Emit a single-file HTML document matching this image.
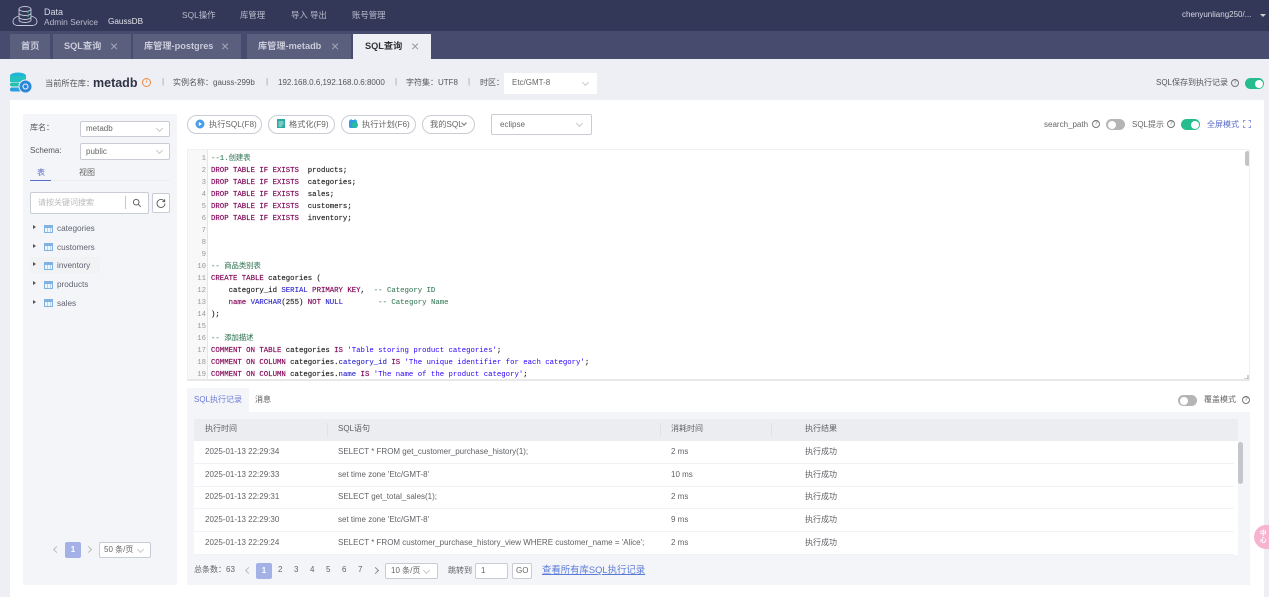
<!DOCTYPE html>
<html lang="zh"><head><meta charset="utf-8"><title>SQL查询</title>
<style>
*{box-sizing:border-box}
html,body{margin:0;padding:0;width:1269px;height:597px;overflow:hidden;background:#eeeff5}
body{position:relative;font:8px "Liberation Sans","Noto Sans CJK SC",sans-serif;color:#555;filter:blur(.3px)}
.a,.t{position:absolute}
.t{white-space:nowrap;line-height:12px}
.tab{position:absolute;top:34px;height:25px;background:#5b5f7e;color:#c9cbd8;font-size:9.2px;line-height:25px;padding-left:11px;white-space:nowrap;font-weight:bold}
.tab i{position:absolute;top:0;font-style:normal;font-weight:normal;font-size:14px;color:#a4a6b8}
.nav{position:absolute;top:9px;color:#b9bccb;font-size:8.4px;line-height:12px;white-space:nowrap}
.sel{position:absolute;background:#fff;border:1px solid #c9ccd4;border-radius:2px;color:#666;font-size:8px;padding-left:5px;white-space:nowrap}
.chev{position:absolute;width:5px;height:5px;border-right:1px solid #c6c8ce;border-bottom:1px solid #c6c8ce;transform:rotate(45deg)}
.btn{position:absolute;top:115px;height:19px;border:1px solid #c9ccd4;border-radius:10px;background:#fff;color:#666;line-height:17px;font-size:8.2px;white-space:nowrap}
.tree{position:absolute;left:57px;color:#5f6470;font-size:8.2px;line-height:12px}
.arrow{position:absolute;left:33px;width:0;height:0;border-left:3px solid #555;border-top:2.5px solid transparent;border-bottom:2.5px solid transparent}
.ticon{position:absolute;left:44px;width:9px;height:8px;border:1px solid #7fb2e0;background:linear-gradient(#7fb2e0 2px,transparent 2px),repeating-linear-gradient(90deg,transparent 0 2px,#b5d3ee 2px 3px),#eef5fb}
#code{position:absolute;left:187px;top:149px;width:1063px;height:232px;background:#fff;border:1px solid #f0f0f0;border-bottom:2px solid #e8e8e8;overflow:hidden}
#gut{position:absolute;left:0;top:0;width:20px;height:230px;background:#f8f8f8;border-right:1px solid #e6e6e6}
.l{position:absolute;left:23px;font:7.33px/12px "Liberation Mono","Noto Sans CJK SC",monospace;white-space:pre;color:#222;-webkit-text-stroke:.15px #222}
.n{position:absolute;left:0;width:18px;text-align:right;font:7.33px/12px "Liberation Mono",monospace;color:#999}
.k{color:#7f0055;-webkit-text-stroke:.15px #7f0055}.b{color:#2a22cc;-webkit-text-stroke:.1px #2a22cc}.c{color:#3f7f5f;-webkit-text-stroke:.1px #3f7f5f}.s{color:#2a00ff;-webkit-text-stroke:0}
.row{position:absolute;left:194px;width:1040px;height:1px;background:#f0f2f5}
.td{position:absolute;font-size:8px;line-height:12px;color:#606266;white-space:nowrap}
.pg{position:absolute;top:564px;font-size:8px;line-height:12px;color:#606266}
.q{position:absolute;width:8px;height:8px;border:1px solid #777;border-radius:50%;font-size:6px;line-height:6px;text-align:center;color:#666}
.sw{position:absolute;width:19px;height:11px;border-radius:6px;background:#b5b5b5}
.sw:after{content:"";position:absolute;left:1.5px;top:1.5px;width:8px;height:8px;border-radius:50%;background:#fff}
.sw.on{background:#25bd8d}.sw.on:after{left:9.5px}
</style></head><body>

<div class="a" style="left:0;top:0;width:1269px;height:31px;background:#343858"></div>
<div class="a" style="left:0;top:31px;width:1269px;height:28px;background:#474c6e"></div>

<svg class="a" style="left:12px;top:5px" width="26" height="22" viewBox="0 0 26 22" fill="none" stroke="#c5c8d6" stroke-width=".9">
<ellipse cx="13" cy="4" rx="6" ry="2.5"/><path d="M7 4v11c0 1.5 3 2.5 6 2.5s6-1 6-2.5V4M7 8c0 1.5 3 2.5 6 2.5s6-1 6-2.5M7 12c0 1.5 3 2.5 6 2.5s6-1 6-2.5"/>
<path d="M7 11C3 12 1 14 1 16.500C1 19 3 20.500 6 20.500H20C23 20.500 25 19 25 16.500C25 14 23 12 19 11"/>
<circle cx="16" cy="7" r=".9" fill="#25bd8d" stroke="none"/><circle cx="16" cy="11" r=".9" fill="#25bd8d" stroke="none"/>
</svg>
<div class="t" style="left:44px;top:6px;font-size:9px;color:#d8dae4">Data</div>
<div class="t" style="left:44px;top:16px;font-size:8.4px;color:#b9bccb">Admin Service</div>
<div class="t" style="left:108px;top:16px;font-size:8.2px;color:#e2e4ec">GaussDB</div>
<div class="nav" style="left:182px">SQL操作</div>
<div class="nav" style="left:240px">库管理</div>
<div class="nav" style="left:291px">导入 导出</div>
<div class="nav" style="left:352px">账号管理</div>
<div class="t" style="left:1182px;top:9px;font-size:8px;color:#d5d7e2">chenyunliang250/...</div>
<div class="a" style="left:1260px;top:14px;border-top:3px solid #ccc;border-left:3px solid transparent;border-right:3px solid transparent"></div>

<div class="tab" style="left:10px;width:40px">首页</div>
<div class="tab" style="left:53px;width:78px">SQL查询<i style="left:57px">×</i></div>
<div class="tab" style="left:133px;width:108px">库管理-postgres<i style="left:88px">×</i></div>
<div class="tab" style="left:247px;width:104px">库管理-metadb<i style="left:84px">×</i></div>
<div class="tab" style="left:353px;width:78px;background:#eeeff5;color:#333;padding-left:12px">SQL查询<i style="left:58px;color:#999">×</i></div>

<svg class="a" style="left:10px;top:72px" width="23" height="22" viewBox="0 0 23 22">
<ellipse cx="8" cy="4" rx="8" ry="3.500" fill="#1fb5d6"/><rect x="0" y="4" width="16" height="6" fill="#23c2c0"/><rect x="0" y="10.500" width="15" height="4" rx="2" fill="#23c2b0"/><rect x="0" y="15.500" width="15" height="4" rx="2" fill="#2a9fe0"/>
<circle cx="15.500" cy="14.500" r="6.500" fill="#2c87d8" stroke="#eeeff5"/><circle cx="15.500" cy="14.500" r="2.500" fill="none" stroke="#fff"/>
</svg>
<div class="t" style="left:45px;top:78px;font-size:8.2px;color:#555">当前所在库：</div>
<div class="t" style="left:93px;top:77px;font-size:12.500px;font-weight:bold;color:#2f3344">metadb</div>
<div class="a" style="left:142px;top:78px;width:9px;height:9px;border:1px solid #ee8a3c;border-radius:50%;color:#ee8a3c;font-size:6px;line-height:7px;text-align:center">i</div>
<div class="t" style="left:162px;top:76px;font-size:8px;color:#999">|</div>
<div class="t" style="left:173px;top:77px;font-size:8px;color:#555">实例名称：gauss-299b</div>
<div class="t" style="left:266px;top:76px;font-size:8px;color:#999">|</div>
<div class="t" style="left:278px;top:77px;font-size:8px;color:#555">192.168.0.6,192.168.0.6:8000</div>
<div class="t" style="left:395px;top:76px;font-size:8px;color:#999">|</div>
<div class="t" style="left:406px;top:77px;font-size:8px;color:#555">字符集：UTF8</div>
<div class="t" style="left:468px;top:76px;font-size:8px;color:#999">|</div>
<div class="t" style="left:480px;top:77px;font-size:8px;color:#555">时区：</div>
<div class="a" style="left:504px;top:73px;width:93px;height:21px;background:#fff"></div>
<div class="t" style="left:512px;top:77px;font-size:8px;color:#666">Etc/GMT-8</div>
<div class="chev" style="left:583px;top:80px"></div>
<div class="t" style="left:1156px;top:77px;font-size:8px;color:#555">SQL保存到执行记录</div>
<div class="q" style="left:1231px;top:79px">?</div>
<div class="sw on" style="left:1245px;top:78px"></div>

<div class="a" style="left:10px;top:100px;width:1254px;height:497px;background:#fff"></div>
<div class="a" style="left:23px;top:114px;width:154px;height:471px;background:#f4f5f8"></div>

<div class="t" style="left:30px;top:122px;color:#555">库名：</div>
<div class="sel" style="left:80px;top:121px;width:90px;height:16px;line-height:14px">metadb</div>
<div class="chev" style="left:157px;top:126px"></div>
<div class="t" style="left:30px;top:145px;color:#555">Schema:</div>
<div class="sel" style="left:80px;top:143px;width:90px;height:17px;line-height:15px">public</div>
<div class="chev" style="left:157px;top:148px"></div>
<div class="t" style="left:37px;top:167px;color:#5a6bc8">表</div>
<div class="t" style="left:79px;top:167px;color:#666">视图</div>
<div class="a" style="left:30px;top:180px;width:140px;height:1px;background:#eceef2"></div>
<div class="a" style="left:30px;top:180px;width:21px;height:1px;background:#5a6bc8"></div>
<div class="sel" style="left:30px;top:192px;width:119px;height:22px;line-height:20px;color:#bbb;padding-left:7px">请按关键词搜索</div>
<div class="a" style="left:125px;top:196px;width:1px;height:13px;background:#c4c6cc"></div>
<svg class="a" style="left:132px;top:198px" width="10" height="10" viewBox="0 0 10 10" fill="none" stroke="#666"><circle cx="4.200" cy="4.200" r="2.800"/><path d="M6.300 6.300L8.800 8.800"/></svg>
<div class="sel" style="left:152px;top:193px;width:18px;height:20px"></div>
<svg class="a" style="left:156px;top:198px" width="10" height="10" viewBox="0 0 10 10" fill="none" stroke="#555" stroke-width=".9"><path d="M8.500 3.500A4 4 0 1 0 9 5.500M8.700 1.300V3.700H6.300"/></svg>

<div class="a" style="left:30px;top:257px;width:70px;height:16px;background:#f1f2f4"></div>
<div class="arrow" style="left:33px;top:225px"></div><div class="ticon" style="top:225px"></div><div class="tree" style="top:223px">categories</div>
<div class="arrow" style="left:33px;top:244px"></div><div class="ticon" style="top:243px"></div><div class="tree" style="top:242px">customers</div>
<div class="arrow" style="left:33px;top:262px"></div><div class="ticon" style="top:262px"></div><div class="tree" style="top:260px">inventory</div>
<div class="arrow" style="left:33px;top:281px"></div><div class="ticon" style="top:281px"></div><div class="tree" style="top:279px">products</div>
<div class="arrow" style="left:33px;top:300px"></div><div class="ticon" style="top:299px"></div><div class="tree" style="top:298px">sales</div>

<div class="chev" style="left:54px;top:547px;transform:rotate(135deg);border-color:#bbb"></div>
<div class="a" style="left:65px;top:542px;width:16px;height:16px;background:#a3b1e6;border-radius:2px;color:#fff;text-align:center;line-height:16px;font-weight:bold">1</div>
<div class="chev" style="left:86px;top:547px;transform:rotate(-45deg);border-color:#bbb"></div>
<div class="sel" style="left:99px;top:542px;width:52px;height:16px;line-height:14px;padding-left:4px">50 条/页</div>
<div class="chev" style="left:138px;top:547px"></div>

<div class="btn" style="left:187px;width:75px;padding-left:21px">执行SQL(F8)</div>
<svg class="a" style="left:195px;top:119px" width="10" height="10"><circle cx="5" cy="5" r="4.500" fill="#4a9de8"/><path d="M3.800 3L7 5 3.800 7z" fill="#fff"/></svg>
<div class="btn" style="left:268px;width:67px;padding-left:20px">格式化(F9)</div>
<svg class="a" style="left:277px;top:119px" width="9" height="10"><rect width="8" height="9" fill="#2da8a0"/><path d="M1.500 3H6.500M1.500 5H6.500M1.500 7H5" stroke="#fff" stroke-width=".7"/></svg>
<div class="btn" style="left:341px;width:75px;padding-left:20px">执行计划(F6)</div>
<svg class="a" style="left:348px;top:118px" width="11" height="11"><rect x="1" y="2" width="8" height="8" rx="1.500" fill="#2f9ee0"/><circle cx="7" cy="7" r="3" fill="#25bd9a"/><path d="M3 1v2M7 1v2" stroke="#2f9ee0"/></svg>
<div class="btn" style="left:422px;width:53px;padding-left:7px">我的SQL</div>
<div class="chev" style="left:462px;top:121px;width:4px;height:4px;border-color:#777"></div>
<div class="sel" style="left:491px;top:114px;width:101px;height:21px;line-height:19px;padding-left:8px">eclipse</div>
<div class="chev" style="left:577px;top:121px"></div>

<div class="t" style="left:1044px;top:119px;color:#666">search_path</div>
<div class="q" style="left:1092px;top:120px">?</div>
<div class="sw" style="left:1106px;top:119px"></div>
<div class="t" style="left:1132px;top:119px;color:#666">SQL提示</div>
<div class="q" style="left:1167px;top:120px">?</div>
<div class="sw on" style="left:1181px;top:119px"></div>
<div class="t" style="left:1207px;top:119px;color:#5a6bc8">全屏模式</div>
<svg class="a" style="left:1243px;top:120px" width="8" height="8" fill="none" stroke="#6a7bd0" stroke-width=".8"><path d="M0.500 2.500V.5H2.500M5.500 .5H7.500V2.500M7.500 5.500V7.500H5.500M2.500 7.500H.5V5.500"/></svg>

<div id="code">
<div id="gut"></div>
<div class="n" style="top:3px">1</div><div class="n" style="top:15px">2</div><div class="n" style="top:27px">3</div><div class="n" style="top:39px">4</div><div class="n" style="top:51px">5</div><div class="n" style="top:63px">6</div><div class="n" style="top:75px">7</div><div class="n" style="top:87px">8</div><div class="n" style="top:99px">9</div><div class="n" style="top:111px">10</div><div class="n" style="top:123px">11</div><div class="n" style="top:135px">12</div><div class="n" style="top:147px">13</div><div class="n" style="top:159px">14</div><div class="n" style="top:171px">15</div><div class="n" style="top:183px">16</div><div class="n" style="top:195px">17</div><div class="n" style="top:207px">18</div><div class="n" style="top:219px">19</div>
<div class="l c" style="top:3px">--1.创建表</div>
<div class="l" style="top:15px"><span class="k">DROP TABLE IF EXISTS</span>  products;</div>
<div class="l" style="top:27px"><span class="k">DROP TABLE IF EXISTS</span>  categories;</div>
<div class="l" style="top:39px"><span class="k">DROP TABLE IF EXISTS</span>  sales;</div>
<div class="l" style="top:51px"><span class="k">DROP TABLE IF EXISTS</span>  customers;</div>
<div class="l" style="top:63px"><span class="k">DROP TABLE IF EXISTS</span>  inventory;</div>
<div class="l c" style="top:111px">-- 商品类别表</div>
<div class="l" style="top:123px"><span class="k">CREATE TABLE</span> categories (</div>
<div class="l" style="top:135px">    category_id <span class="b">SERIAL</span> <span class="k">PRIMARY KEY</span>,  <span class="c">-- Category ID</span></div>
<div class="l" style="top:147px">    <span class="k">name</span> <span class="b">VARCHAR</span>(255) <span class="k">NOT</span> <span class="b">NULL</span>        <span class="c">-- Category Name</span></div>
<div class="l" style="top:159px">);</div>
<div class="l c" style="top:183px">-- 添加描述</div>
<div class="l" style="top:195px"><span class="k">COMMENT ON TABLE</span> categories <span class="k">IS</span> <span class="s">'Table storing product categories'</span>;</div>
<div class="l" style="top:207px"><span class="k">COMMENT ON COLUMN</span> categories.<span class="b">category_id</span> <span class="k">IS</span> <span class="s">'The unique identifier for each category'</span>;</div>
<div class="l" style="top:219px"><span class="k">COMMENT ON COLUMN</span> categories.<span class="b">name</span> <span class="k">IS</span> <span class="s">'The name of the product category'</span>;</div>
<div class="a" style="left:1057px;top:1px;width:5px;height:15px;background:#c4c4c4;border-radius:3px"></div>
<svg class="a" style="left:1055px;top:224px" width="6" height="6" fill="none" stroke="#888" stroke-width=".8"><path d="M5 1V5H1"/></svg>
</div>

<div class="a" style="left:187px;top:412px;width:1063px;height:173px;background:#f4f5f8"></div>
<div class="a" style="left:187px;top:388px;width:62px;height:24px;background:#f4f5f8"></div>
<div class="t" style="left:194px;top:394px;color:#6a7bd8">SQL执行记录</div>
<div class="t" style="left:255px;top:394px;color:#555">消息</div>
<div class="sw" style="left:1178px;top:395px"></div>
<div class="t" style="left:1204px;top:394px;color:#666">覆盖模式</div>
<div class="q" style="left:1242px;top:396px">?</div>

<div class="a" style="left:194px;top:419px;width:1044px;height:22px;background:#ebedf1"></div>
<div class="a" style="left:194px;top:441px;width:1044px;height:114px;background:#fff"></div>
<div class="a" style="left:327px;top:423px;width:1px;height:13px;background:#e0e2e7"></div>
<div class="a" style="left:660px;top:423px;width:1px;height:13px;background:#e0e2e7"></div>
<div class="a" style="left:771px;top:423px;width:1px;height:13px;background:#e0e2e7"></div>
<div class="td" style="left:205px;top:423px">执行时间</div><div class="td" style="left:338px;top:423px">SQL语句</div><div class="td" style="left:671px;top:423px">消耗时间</div><div class="td" style="left:805px;top:423px">执行结果</div>

<div class="row" style="top:463px"></div><div class="row" style="top:486px"></div><div class="row" style="top:508px"></div><div class="row" style="top:531px"></div><div class="row" style="top:554px"></div>
<div class="a" style="left:1238px;top:442px;width:5px;height:42px;background:#c4c6cb;border-radius:3px"></div>

<div class="td" style="left:205px;top:446px">2025-01-13 22:29:34</div><div class="td" style="left:338px;top:446px">SELECT * FROM get_customer_purchase_history(1);</div><div class="td" style="left:671px;top:446px">2 ms</div><div class="td" style="left:805px;top:446px">执行成功</div>
<div class="td" style="left:205px;top:469px">2025-01-13 22:29:33</div><div class="td" style="left:338px;top:469px">set time zone 'Etc/GMT-8'</div><div class="td" style="left:671px;top:469px">10 ms</div><div class="td" style="left:805px;top:469px">执行成功</div>
<div class="td" style="left:205px;top:491px">2025-01-13 22:29:31</div><div class="td" style="left:338px;top:491px">SELECT get_total_sales(1);</div><div class="td" style="left:671px;top:491px">2 ms</div><div class="td" style="left:805px;top:491px">执行成功</div>
<div class="td" style="left:205px;top:514px">2025-01-13 22:29:30</div><div class="td" style="left:338px;top:514px">set time zone 'Etc/GMT-8'</div><div class="td" style="left:671px;top:514px">9 ms</div><div class="td" style="left:805px;top:514px">执行成功</div>
<div class="td" style="left:205px;top:537px">2025-01-13 22:29:24</div><div class="td" style="left:338px;top:537px">SELECT * FROM customer_purchase_history_view WHERE customer_name = 'Alice';</div><div class="td" style="left:671px;top:537px">2 ms</div><div class="td" style="left:805px;top:537px">执行成功</div>

<div class="pg" style="left:194px">总条数：63</div>
<div class="chev" style="left:246px;top:568px;transform:rotate(135deg);border-color:#bbb"></div>
<div class="a" style="left:256px;top:563px;width:16px;height:16px;background:#a3b1e6;border-radius:2px;color:#fff;text-align:center;line-height:16px;font-weight:bold">1</div>
<div class="pg" style="left:278px">2</div><div class="pg" style="left:294px">3</div><div class="pg" style="left:310px">4</div><div class="pg" style="left:326px">5</div><div class="pg" style="left:342px">6</div><div class="pg" style="left:358px">7</div>
<div class="chev" style="left:373px;top:568px;transform:rotate(-45deg);border-color:#888"></div>
<div class="sel" style="left:385px;top:563px;width:53px;height:16px;line-height:14px;padding-left:5px">10 条/页</div>
<div class="chev" style="left:424px;top:568px"></div>
<div class="pg" style="left:448px;top:565px">跳转到</div>
<div class="sel" style="left:475px;top:563px;width:33px;height:16px;line-height:14px">1</div>
<div class="sel" style="left:512px;top:563px;width:20px;height:16px;line-height:14px;padding-left:3px">GO</div>
<div class="t" style="left:542px;top:564px;font-size:9.400px;color:#5a7bd8;text-decoration:underline">查看所有库SQL执行记录</div>

<div class="a" style="left:1254px;top:525px;width:26px;height:24px;border-radius:12px;background:#f7b4d0;color:#fff;font-size:6.500px;line-height:7px;padding:5px 0 0 6px;font-weight:bold">中<br>心</div>
</body></html>
